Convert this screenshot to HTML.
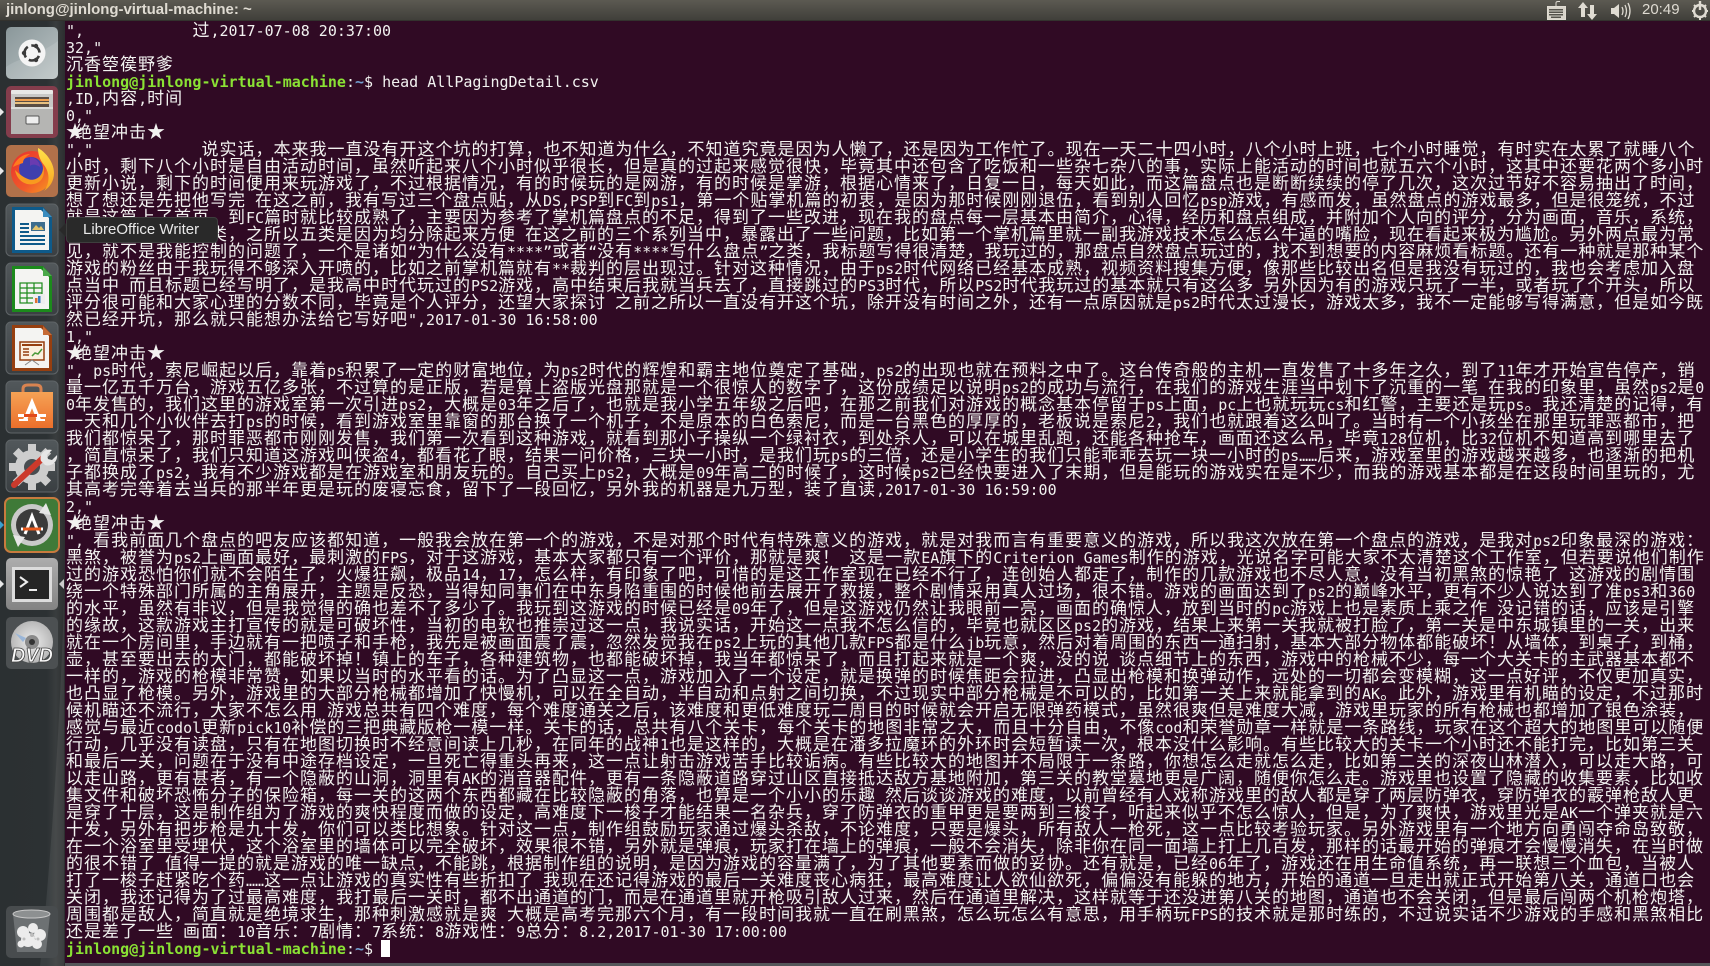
<!DOCTYPE html>
<html lang="zh-CN"><head><meta charset="utf-8"><title>jinlong@jinlong-virtual-machine: ~</title>
<style>
*{box-sizing:border-box}
html,body{margin:0;padding:0;width:1710px;height:966px;overflow:hidden;background:#2a2e30}
#bar{position:absolute;left:0;top:0;width:1710px;height:21px;background:linear-gradient(#5c5a52,#403f3a);border-bottom:1px solid #33322e}
#ttl{position:absolute;left:6px;top:0;font:bold 15px/20px "Liberation Sans",sans-serif;color:#dfdbd2;letter-spacing:-.03px;white-space:pre}
#clk{position:absolute;left:1642px;top:0;font:15px/20px "Liberation Sans",sans-serif;color:#dfdbd2}
#lau{position:absolute;left:0;top:21px;width:65px;height:945px;background:linear-gradient(90deg,#2b3032 0,#2c3133 72%,#393d3e 86%,#2c2e2f 100%)}
#term{position:absolute;left:65px;top:21px;width:1645px;height:942px;background:#300a24}
#foot{position:absolute;left:65px;top:963px;width:1645px;height:3px;background:#55575a}
#t{position:absolute;left:66px;top:20px;width:1644px;height:935px;color:#f2f2f0;font:17px/17px "Noto Sans CJK SC","WenQuanYi Zen Hei",sans-serif;letter-spacing:1px}
#t div{height:17px;white-space:pre}
#t i{font:15px/17px "DejaVu Sans Mono","Liberation Mono",monospace;letter-spacing:0}
#t b{display:inline-block;width:9px;font:18px/17px "Noto Sans CJK SC",sans-serif;letter-spacing:0;overflow:visible;font-weight:normal}
.g{font-weight:bold!important;color:#8ae234}
.bl{font-weight:bold!important;color:#729fcf}
#cur{position:absolute;left:381px;top:940px;width:9px;height:17px;background:#fff}
#tip{position:absolute;left:66px;top:217px;width:152px;height:26px;border-radius:4px;background:#292929;border:1px solid #3e3e3e;color:#e9e9e9;font:15px/24px "Liberation Sans",sans-serif;padding-left:16px;white-space:pre}
#arr{position:absolute;left:59px;top:222px;width:0;height:0;border-top:8px solid transparent;border-bottom:8px solid transparent;border-right:8px solid #292929}
svg{position:absolute;overflow:visible}
</style></head><body>
<div id="term"></div><div id="foot"></div>
<div id="t">
<div><i>",            </i>过<i>,2017-07-08 20:37:00</i></div>
<div><i>32,"</i></div>
<div>沉香箜篌野爹</div>
<div><i class="g">jinlong@jinlong-virtual-machine</i><i>:</i><i class="bl">~</i><i>$ head AllPagingDetail.csv</i></div>
<div><i>,ID,</i>内容<i>,</i>时间</div>
<div><i>0,"</i></div>
<div><b>★</b>绝望冲击<b>★</b></div>
<div><i>","            </i>说实话，本来我一直没有开这个坑的打算，也不知道为什么，不知道究竟是因为人懒了，还是因为工作忙了。现在一天二十四小时，八个小时上班，七个小时睡觉，有时实在太累了就睡八个</div>
<div>小时，剩下八个小时是自由活动时间，虽然听起来八个小时似乎很长，但是真的过起来感觉很快，毕竟其中还包含了吃饭和一些杂七杂八的事，实际上能活动的时间也就五六个小时，这其中还要花两个多小时</div>
<div>更新小说，剩下的时间便用来玩游戏了，不过根据情况，有的时候玩的是网游，有的时候是掌游，根据心情来了，日复一日，每天如此，而这篇盘点也是断断续续的停了几次，这次过节好不容易抽出了时间，</div>
<div>想了想还是先把他写完<i> </i>在这之前，我有写过三个盘点贴，从<i>DS,PSP</i>到<i>FC</i>到<i>ps1</i>，第一个贴掌机篇的初衷，是因为那时候刚刚退伍，看到别人回忆<i>psp</i>游戏，有感而发，虽然盘点的游戏最多，但是很笼统，不过</div>
<div>就是这篇上了首页，到<i>FC</i>篇时就比较成熟了，主要因为参考了掌机篇盘点的不足，得到了一些改进，现在我的盘点每一层基本由简介，心得，经历和盘点组成，并附加个人向的评分，分为画面，音乐，系统，</div>
<div>操作，和游戏性五类，之所以五类是因为均分除起来方便<i> </i>在这之前的三个系列当中，暴露出了一些问题，比如第一个掌机篇里就一副我游戏技术怎么怎么牛逼的嘴脸，现在看起来极为尴尬。另外两点最为常</div>
<div>见，就不是我能控制的问题了，一个是诸如<i>“</i>为什么没有<i>****”</i>或者<i>“</i>没有<i>****</i>写什么盘点<i>”</i>之类，我标题写得很清楚，我玩过的，那盘点自然盘点玩过的，找不到想要的内容麻烦看标题。还有一种就是那种某个</div>
<div>游戏的粉丝由于我玩得不够深入开喷的，比如之前掌机篇就有<i>**</i>裁判的层出现过。针对这种情况，由于<i>ps2</i>时代网络已经基本成熟，视频资料搜集方便，像那些比较出名但是我没有玩过的，我也会考虑加入盘</div>
<div>点当中<i> </i>而且标题已经写明了，是我高中时代玩过的<i>PS2</i>游戏，高中结束后我就当兵去了，直接跳过的<i>PS3</i>时代，所以<i>PS2</i>时代我玩过的基本就只有这么多<i> </i>另外因为有的游戏只玩了一半，或者玩了个开头，所以</div>
<div>评分很可能和大家心理的分数不同，毕竟是个人评分，还望大家探讨<i> </i>之前之所以一直没有开这个坑，除开没有时间之外，还有一点原因就是<i>ps2</i>时代太过漫长，游戏太多，我不一定能够写得满意，但是如今既</div>
<div>然已经开坑，那么就只能想办法给它写好吧<i>",2017-01-30 16:58:00</i></div>
<div><i>1,"</i></div>
<div><b>★</b>绝望冲击<b>★</b></div>
<div><i>", ps</i>时代，索尼崛起以后，靠着<i>ps</i>积累了一定的财富地位，为<i>ps2</i>时代的辉煌和霸主地位奠定了基础，<i>ps2</i>的出现也就在预料之中了。这台传奇般的主机一直发售了十多年之久，到了<i>11</i>年才开始宣告停产，销</div>
<div>量一亿五千万台，游戏五亿多张，不过算的是正版，若是算上盗版光盘那就是一个很惊人的数字了，这份成绩足以说明<i>ps2</i>的成功与流行，在我们的游戏生涯当中划下了沉重的一笔<i> </i>在我的印象里，虽然<i>ps2</i>是<i>0</i></div>
<div><i>0</i>年发售的，我们这里的游戏室第一次引进<i>ps2</i>，大概是<i>03</i>年之后了，也就是我小学五年级之后吧，在那之前我们对游戏的概念基本停留于<i>ps</i>上面，<i>pc</i>上也就玩玩<i>cs</i>和红警，主要还是玩<i>ps</i>。我还清楚的记得，有</div>
<div>一天和几个小伙伴去打<i>ps</i>的时候，看到游戏室里靠窗的那台换了一个机子，不是原本的白色索尼，而是一台黑色的厚厚的，老板说是索尼<i>2</i>，我们也就跟着这么叫了。当时有一个小孩坐在那里玩罪恶都市，把</div>
<div>我们都惊呆了，那时罪恶都市刚刚发售，我们第一次看到这种游戏，就看到那小子操纵一个绿衬衣，到处杀人，可以在城里乱跑，还能各种抢车，画面还这么吊，毕竟<i>128</i>位机，比<i>32</i>位机不知道高到哪里去了</div>
<div>，简直惊呆了，我们只知道这游戏叫侠盗<i>4</i>，都看花了眼，结果一问价格，三块一小时，是我们玩<i>ps</i>的三倍，还是小学生的我们只能乖乖去玩一块一小时的<i>ps……</i>后来，游戏室里的游戏越来越多，也逐渐的把机</div>
<div>子都换成了<i>ps2</i>，我有不少游戏都是在游戏室和朋友玩的。自己买上<i>ps2</i>，大概是<i>09</i>年高二的时候了，这时候<i>ps2</i>已经快要进入了末期，但是能玩的游戏实在是不少，而我的游戏基本都是在这段时间里玩的，尤</div>
<div>其高考完等着去当兵的那半年更是玩的废寝忘食，留下了一段回忆，另外我的机器是九万型，装了直读<i>,2017-01-30 16:59:00</i></div>
<div><i>2,"</i></div>
<div><b>★</b>绝望冲击<b>★</b></div>
<div><i>", </i>看我前面几个盘点的吧友应该都知道，一般我会放在第一个的游戏，不是对那个时代有特殊意义的游戏，就是对我而言有重要意义的游戏，所以我这次放在第一个盘点的游戏，是我对<i>ps2</i>印象最深的游戏：</div>
<div>黑煞，被誉为<i>ps2</i>上画面最好，最刺激的<i>FPS</i>，对于这游戏，基本大家都只有一个评价，那就是爽！<i> </i>这是一款<i>EA</i>旗下的<i>Criterion Games</i>制作的游戏，光说名字可能大家不太清楚这个工作室，但若要说他们制作</div>
<div>过的游戏恐怕你们就不会陌生了，火爆狂飙，极品<i>14</i>，<i>17</i>，怎么样，有印象了吧，可惜的是这工作室现在已经不行了，连创始人都走了，制作的几款游戏也不尽人意，没有当初黑煞的惊艳了<i> </i>这游戏的剧情围</div>
<div>绕一个特殊部门所属的主角展开，主题是反恐，当得知同事们在中东身陷重围的时候他前去展开了救援，整个剧情采用真人过场，很不错。游戏的画面达到了<i>ps2</i>的巅峰水平，更有不少人说达到了准<i>ps3</i>和<i>360</i></div>
<div>的水平，虽然有非议，但是我觉得的确也差不了多少了。我玩到这游戏的时候已经是<i>09</i>年了，但是这游戏仍然让我眼前一亮，画面的确惊人，放到当时的<i>pc</i>游戏上也是素质上乘之作<i> </i>没记错的话，应该是引擎</div>
<div>的缘故，这款游戏主打宣传的就是可破坏性，当初的电软也推崇过这一点，我说实话，开始这一点我不怎么信的，毕竟也就区区<i>ps2</i>的游戏，结果上来第一关我就被打脸了，第一关是中东城镇里的一关，出来</div>
<div>就在一个房间里，手边就有一把喷子和手枪，我先是被画面震了震，忽然发觉我在<i>ps2</i>上玩的其他几款<i>FPS</i>都是什么<i>jb</i>玩意，然后对着周围的东西一通扫射，基本大部分物体都能破坏！从墙体，到桌子，到桶，</div>
<div>壶，甚至要出去的大门，都能破坏掉！镇上的车子，各种建筑物，也都能破坏掉，我当年都惊呆了，而且打起来就是一个爽，没的说<i> </i>谈点细节上的东西，游戏中的枪械不少，每一个大关卡的主武器基本都不</div>
<div>一样的，游戏的枪模非常赞，如果以当时的水平看的话。为了凸显这一点，游戏加入了一个设定，就是换弹的时候焦距会拉进，凸显出枪模和换弹动作，远处的一切都会变模糊，这一点好评，不仅更加真实，</div>
<div>也凸显了枪模。另外，游戏里的大部分枪械都增加了快慢机，可以在全自动，半自动和点射之间切换，不过现实中部分枪械是不可以的，比如第一关上来就能拿到的<i>AK</i>。此外，游戏里有机瞄的设定，不过那时</div>
<div>候机瞄还不流行，大家不怎么用<i> </i>游戏总共有四个难度，每个难度通关之后，该难度和更低难度玩二周目的时候就会开启无限弹药模式，虽然很爽但是难度大减，游戏里玩家的所有枪械也都增加了银色涂装，</div>
<div>感觉与最近<i>codol</i>更新<i>pick10</i>补偿的三把典藏版枪一模一样。关卡的话，总共有八个关卡，每个关卡的地图非常之大，而且十分自由，不像<i>cod</i>和荣誉勋章一样就是一条路线，玩家在这个超大的地图里可以随便</div>
<div>行动，几乎没有读盘，只有在地图切换时不经意间读上几秒，在同年的战神<i>1</i>也是这样的，大概是在潘多拉魔环的外环时会短暂读一次，根本没什么影响。有些比较大的关卡一个小时还不能打完，比如第三关</div>
<div>和最后一关，问题在于没有中途存档设定，一旦死亡得重头再来，这一点让射击游戏苦手比较诟病。有些比较大的地图并不局限于一条路，你想怎么走就怎么走，比如第二关的深夜山林潜入，可以走大路，可</div>
<div>以走山路，更有甚者，有一个隐蔽的山洞，洞里有<i>AK</i>的消音器配件，更有一条隐蔽道路穿过山区直接抵达敌方基地附加，第三关的教堂墓地更是广阔，随便你怎么走。游戏里也设置了隐藏的收集要素，比如收</div>
<div>集文件和破坏恐怖分子的保险箱，每一关的这两个东西都藏在比较隐蔽的角落，也算是一个小小的乐趣<i> </i>然后谈谈游戏的难度，以前曾经有人戏称游戏里的敌人都是穿了两层防弹衣，穿防弹衣的霰弹枪敌人更</div>
<div>是穿了十层，这是制作组为了游戏的爽快程度而做的设定，高难度下一梭子才能结果一名杂兵，穿了防弹衣的重甲更是要两到三梭子，听起来似乎不怎么惊人，但是，为了爽快，游戏里光是<i>AK</i>一个弹夹就是六</div>
<div>十发，另外有把步枪是九十发，你们可以类比想象。针对这一点，制作组鼓励玩家通过爆头杀敌，不论难度，只要是爆头，所有敌人一枪死，这一点比较考验玩家。另外游戏里有一个地方向勇闯夺命岛致敬，</div>
<div>在一个浴室里受埋伏，这个浴室里的墙体可以完全破坏，效果很不错，另外就是弹痕，玩家打在墙上的弹痕，一般不会消失，除非你在同一面墙上打上几百发，那样的话最开始的弹痕才会慢慢消失，在当时做</div>
<div>的很不错了<i> </i>值得一提的就是游戏的唯一缺点，不能跳，根据制作组的说明，是因为游戏的容量满了，为了其他要素而做的妥协。还有就是，已经<i>06</i>年了，游戏还在用生命值系统，再一联想三个血包，当被人</div>
<div>打了一梭子赶紧吃个药<i>……</i>这一点让游戏的真实性有些折扣了<i> </i>我现在还记得游戏的最后一关难度丧心病狂，最高难度让人欲仙欲死，偏偏没有能躲的地方，开始的通道一旦走出就正式开始第八关，通道口也会</div>
<div>关闭，我还记得为了过最高难度，我打最后一关时，都不出通道的门，而是在通道里就开枪吸引敌人过来，然后在通道里解决，这样就等于还没进第八关的地图，通道也不会关闭，但是最后闯两个机枪炮塔，</div>
<div>周围都是敌人，简直就是绝境求生，那种刺激感就是爽<i> </i>大概是高考完那六个月，有一段时间我就一直在刷黑煞，怎么玩怎么有意思，用手柄玩<i>FPS</i>的技术就是那时练的，不过说实话不少游戏的手感和黑煞相比</div>
<div>还是差了一些<i> </i>画面：<i>10</i>音乐：<i>7</i>剧情：<i>7</i>系统：<i>8</i>游戏性：<i>9</i>总分：<i>8.2,2017-01-30 17:00:00</i></div>
<div><i class="g">jinlong@jinlong-virtual-machine</i><i>:</i><i class="bl">~</i><i>$ </i></div>
</div>
<div id="cur"></div>

<div id="bar"><div id="ttl">jinlong@jinlong-virtual-machine: ~</div><div id="clk">20:49</div>
<svg style="left:0;top:0" width="1710" height="21" viewBox="0 0 1710 21">
<g fill="none" stroke="#dfdbd2"><rect x="1547.5" y="6.5" width="18" height="13" fill="#d8d4ca"/><path d="M1556 6V3q0-1.500 2-1.500h2" stroke-width="1"/></g>
<g fill="#55534c"><rect x="1549" y="9" width="14" height="1.500"/><rect x="1549" y="11.500" width="14" height="1.500"/><rect x="1549" y="14" width="14" height="1.500"/><rect x="1551" y="16.500" width="10" height="1.500"/></g>
<path d="M1583 2l-5 6h3v9h4V8h3zM1592 20l5-6h-3V5h-4v9h-3z" fill="#dfdbd2"/>
<path d="M1611 8h3l5-4v14l-5-4h-3z" fill="#dfdbd2"/><path d="M1622 7q2 4 0 8M1625 5q3 6 0 12M1628 3q4 8 0 16" fill="none" stroke="#dfdbd2" stroke-width="1.300"/>
<g fill="none" stroke="#dfdbd2" stroke-width="2.400"><circle cx="1700" cy="11" r="6"/><path d="M1700 1v9" /></g>
<g stroke="#dfdbd2" stroke-width="2"><path d="M1692 11h2M1706 11h2M1694 5l2 2M1706 5l-2 2M1694 17l2-2M1706 17l-2-2M1700 17v3"/></g>
</svg></div>

<div id="lau"></div>
<svg style="left:0;top:0" width="65" height="966" viewBox="0 0 65 966">
<defs>
<linearGradient id="gt" x1="0" y1="0" x2="0" y2="1"><stop offset="0" stop-color="#52585b"/><stop offset="1" stop-color="#3a3f42"/></linearGradient>
<linearGradient id="gd" x1="0" y1="0" x2="1" y2="1"><stop offset="0" stop-color="#8a979a"/><stop offset=".5" stop-color="#a2adaf"/><stop offset="1" stop-color="#bcc4c4"/></linearGradient>
<linearGradient id="gf" x1="0" y1="0" x2="0" y2="1"><stop offset="0" stop-color="#ffe24a"/><stop offset="1" stop-color="#f9a11f"/></linearGradient>
<linearGradient id="gr" x1="0" y1="0" x2="1" y2="1"><stop offset="0" stop-color="#e8302f"/><stop offset=".6" stop-color="#f0592a"/><stop offset="1" stop-color="#f9a01f"/></linearGradient>
<linearGradient id="ga" x1="0" y1="0" x2="0" y2="1"><stop offset="0" stop-color="#f5a255"/><stop offset="1" stop-color="#ec6f2b"/></linearGradient>
<linearGradient id="gm" x1="0" y1="0" x2="0" y2="1"><stop offset="0" stop-color="#adadad"/><stop offset="1" stop-color="#838383"/></linearGradient>
<radialGradient id="gc" cx=".5" cy=".5" r=".5"><stop offset="0" stop-color="#ededed"/><stop offset="1" stop-color="#b8b8b8"/></radialGradient>
</defs>
<path d="M64 600C60 720 52 850 40 966H64z" fill="#fff" opacity=".07"/>
<path d="M0 108l4 4-4 4zM0 167l4 4-4 4zM0 580l4 4-4 4z" fill="#e8e8e8"/>
<path d="M0 521l4 4-4 4z" fill="#3aa0d0"/>
<path d="M64 579l-5 5 5 5z" fill="#ccc"/>

<g transform="translate(6 27)"><rect width="52" height="52" rx="5" fill="url(#gd)"/><path d="M0 40C14 30 30 30 52 14V47a5 5 0 0 1-5 5H5a5 5 0 0 1-5-5z" fill="#fff" opacity=".12"/><circle cx="26" cy="26" r="13.500" fill="#f4f4f4"/><circle cx="26" cy="26" r="7.500" fill="none" stroke="#3a3a3a" stroke-width="2.600" stroke-dasharray="12 3.700" stroke-dashoffset="-3"/><circle cx="18" cy="26" r="2.200" fill="#3a3a3a"/><circle cx="30" cy="19" r="2.200" fill="#3a3a3a"/><circle cx="30" cy="33" r="2.200" fill="#3a3a3a"/></g>

<g transform="translate(6 86)"><rect width="52" height="52" rx="5" fill="#843d4c"/><rect x="5" y="4" width="42" height="44" rx="2" fill="#c8c8c6"/><rect x="5" y="4" width="42" height="4" rx="1" fill="#e8e8e6"/><rect x="9" y="11" width="34" height="10" fill="#5a4d44"/><rect x="9" y="13" width="34" height="2" fill="#f0a050"/><rect x="9" y="16" width="34" height="2" fill="#e8c080"/><rect x="5" y="21" width="42" height="27" fill="#b5b5b3"/><rect x="5" y="21" width="42" height="2" fill="#dcdcda"/><rect x="20" y="30" width="13" height="8" rx="1" fill="#eee" stroke="#555"/></g>

<g transform="translate(6 145)"><rect width="52" height="52" rx="5" fill="#b1714a"/><circle cx="26" cy="27" r="21" fill="url(#gr)"/><path d="M32 3C38 6 48 16 48 28C48 36 44 42 38 46C44 38 44 28 38 20C34 15 32 10 32 3z" fill="url(#gf)"/><circle cx="25" cy="24" r="12" fill="#3f3fae"/><path d="M24 12C30 13 34 17 34 22C30 19 26 19 24 21z" fill="#6a3bb0"/><path d="M7 22C10 14 17 9 24 9C19 12 17 15 17 18C14 19 11 20 7 22z" fill="#ff7a1f"/><path d="M9 25C11 37 22 42 31 38C38 35 39 27 37 21C38 31 29 37 22 34C17 32 13 29 9 25z" fill="#f89a1f"/></g>

<g transform="translate(6 204)"><rect width="52" height="52" rx="5" fill="url(#gt)" stroke="#5f6467"/><path d="M6 3h31l9 10v36H6z" fill="#0e5a8a"/><path d="M9 6h26l8 8v32H9z" fill="#f4f4f2"/><path d="M37 4l9 9h-9z" fill="#3a8cbf"/><rect x="25" y="18" width="14" height="9" fill="#3d6d8e"/><path d="M26 26l4-5 3 3 2-2 3 4z" fill="#e2c36c"/><path d="M14 20h9M14 24h9M14 28h9M14 32h25M14 36h25M14 40h25" stroke="#0e5a8a" stroke-width="2"/></g>

<g transform="translate(6 263)"><rect width="52" height="52" rx="5" fill="url(#gt)" stroke="#5f6467"/><path d="M6 3h31l9 10v36H6z" fill="#1c8a1c"/><path d="M9 6h26l8 8v32H9z" fill="#f4f4f2"/><path d="M37 4l9 9h-9z" fill="#4aa84a"/><g fill="none" stroke="#1c8a1c" stroke-width="1.200"><rect x="14" y="20" width="22" height="20"/><path d="M14 25h22M14 30h22M14 35h22M21 20v20M28 20v20"/></g><rect x="27" y="31" width="12" height="10" fill="#eee"/><rect x="29" y="35" width="2.500" height="5" fill="#e07030"/><rect x="32" y="33" width="2.500" height="7" fill="#3a7ac0"/></g>

<g transform="translate(6 322)"><rect width="52" height="52" rx="5" fill="url(#gt)" stroke="#5f6467"/><path d="M6 3h31l9 10v36H6z" fill="#963f10"/><path d="M9 6h26l8 8v32H9z" fill="#f4f4f2"/><path d="M37 4l9 9h-9z" fill="#c66a35"/><rect x="14" y="20" width="24" height="18" fill="#fbf0e0" stroke="#963f10" stroke-width="1.500"/><rect x="16" y="22" width="20" height="2" fill="#963f10"/><path d="M17 27h6M17 30h6M17 33h6" stroke="#963f10" stroke-width="1.500"/><path d="M26 34l3-3 3 1 4-5" stroke="#4a9a3a" stroke-width="1.500" fill="none"/><path d="M19 43l7-5 7 5" stroke="#888" fill="none"/></g>

<g transform="translate(6 381)"><rect width="52" height="52" rx="5" fill="url(#gt)" stroke="#5f6467"/><path d="M5 11h42v36H5z" fill="url(#ga)"/><path d="M17 11V8q0-4 5-4h8q5 0 5 4v3" fill="none" stroke="#d88350" stroke-width="3"/><path d="M19 39l7-17 7 17" stroke="#fff" stroke-width="4" fill="none"/><rect x="12" y="33" width="28" height="3" fill="#fff"/><rect x="18" y="33" width="13" height="3" fill="#e24a1a"/><path d="M13 39h9M30 39h9" stroke="#fff" stroke-width="2"/></g>

<g transform="translate(6 440)"><rect width="52" height="52" rx="5" fill="url(#gt)" stroke="#5f6467"/><g fill="#cdcdcd" transform="translate(26 27)"><circle r="17"/><g id="th"><rect x="-4" y="-23" width="8" height="9"/><rect x="-4" y="14" width="8" height="9"/><rect x="-23" y="-4" width="9" height="8"/><rect x="14" y="-4" width="9" height="8"/></g><g transform="rotate(45)"><rect x="-4" y="-23" width="8" height="9"/><rect x="-4" y="14" width="8" height="9"/><rect x="-23" y="-4" width="9" height="8"/><rect x="14" y="-4" width="9" height="8"/></g></g><circle cx="26" cy="27" r="8" fill="#484d50"/><path d="M8 45L38 17" stroke="#cc3a2c" stroke-width="6" stroke-linecap="round"/><path d="M35 21c-2-6 3-13 11-11l-5 5 1 4 4 1 5-5c1 7-6 12-12 10z" fill="#e6e6e6"/></g>

<g transform="translate(6 499)"><rect x="-1" y="-1" width="54" height="54" rx="6" fill="#3f7a38" stroke="#c87b3e" stroke-width="2"/><circle cx="26" cy="26" r="21" fill="#c9c9c9"/><circle cx="26" cy="26" r="16" fill="#3b3b3b"/><path d="M19 35l7-18 7 18M15 30h22" stroke="#fff" stroke-width="3" fill="none"/><rect x="17" y="28.500" width="18" height="3" fill="#e85a1e"/><path d="M40 4l5 12-12-2zM12 48l-5-12 12 2z" fill="#e6e6e6"/></g>

<g transform="translate(6 558)"><rect width="52" height="52" rx="5" fill="url(#gm)"/><rect x="6" y="9" width="40" height="35" fill="#dcdcdc"/><rect x="9" y="12" width="34" height="29" fill="#262626"/><path d="M14 19l7 5-7 5" fill="none" stroke="#eee" stroke-width="2"/><rect x="23" y="31" width="8" height="2" fill="#eee"/></g>

<g transform="translate(6 617)"><rect width="52" height="52" rx="5" fill="#4c5052"/><circle cx="26" cy="25" r="21" fill="url(#gc)"/><circle cx="26" cy="25" r="7" fill="#8a8a8a"/><circle cx="26" cy="25" r="3" fill="#333"/><path d="M9 16l11 5-3 4z" fill="#9ab6d8"/><text x="26" y="45" text-anchor="middle" font-family="Liberation Sans,sans-serif" font-weight="bold" font-style="italic" font-size="20" textLength="42" lengthAdjust="spacingAndGlyphs" fill="#fafafa" stroke="#444" stroke-width=".8">DVD</text></g>

<g transform="translate(6 906)"><rect width="52" height="52" rx="5" fill="#484c4e"/><path d="M7 8h37l-4 38H11z" fill="#6d7173"/><ellipse cx="25.500" cy="8" rx="18.500" ry="4" fill="#8d9091" stroke="#c8c8c8"/><g fill="#ececec"><circle cx="17" cy="26" r="6"/><circle cx="27" cy="22" r="5"/><circle cx="34" cy="29" r="6"/><circle cx="22" cy="34" r="7"/><circle cx="31" cy="38" r="5"/><circle cx="15" cy="38" r="3.500"/></g><g fill="#bdbdbd"><circle cx="26" cy="29" r="2"/><circle cx="18" cy="33" r="1.500"/><circle cx="32" cy="33" r="1.500"/></g></g>
</svg>
<div id="arr"></div><div id="tip">LibreOffice Writer</div>
</body></html>
